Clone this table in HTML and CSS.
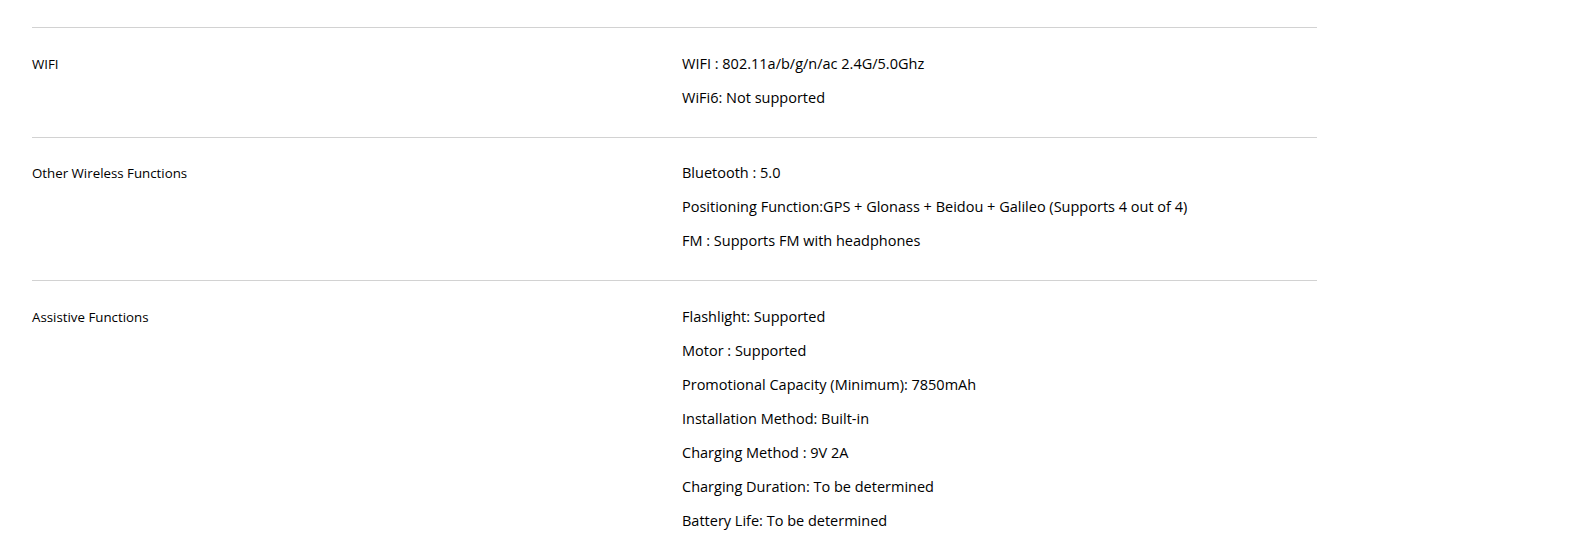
FILE: index.html
```html
<!DOCTYPE html>
<html lang="en">
<head>
<meta charset="utf-8">
<title>Specifications</title>
<link rel="stylesheet" href="styles.css">
</head>
<body>
<div class="specs">
  <div class="spec-row">
    <div class="spec-label">WIFI</div>
    <div class="spec-values">
      <p class="spec-value">WIFI : 802.11a/b/g/n/ac 2.4G/5.0Ghz</p>
      <p class="spec-value">WiFi6: Not supported</p>
    </div>
  </div>
  <div class="spec-row">
    <div class="spec-label">Other Wireless Functions</div>
    <div class="spec-values">
      <p class="spec-value">Bluetooth : 5.0</p>
      <p class="spec-value">Positioning Function:GPS + Glonass + Beidou + Galileo (Supports 4 out of 4)</p>
      <p class="spec-value">FM : Supports FM with headphones</p>
    </div>
  </div>
  <div class="spec-row">
    <div class="spec-label">Assistive Functions</div>
    <div class="spec-values">
      <p class="spec-value">Flashlight: Supported</p>
      <p class="spec-value">Motor : Supported</p>
      <p class="spec-value">Promotional Capacity (Minimum): 7850mAh</p>
      <p class="spec-value">Installation Method: Built-in</p>
      <p class="spec-value">Charging Method : 9V 2A</p>
      <p class="spec-value">Charging Duration: To be determined</p>
      <p class="spec-value">Battery Life: To be determined</p>
    </div>
  </div>
</div>
</body>
</html>
```

FILE: styles.css
```css
html, body {
  margin: 0;
  padding: 0;
  background: #fff;
}

body {
  font-family: "Open Sans", "Noto Sans", sans-serif;
  font-size: 14.5px;
  color: #000;
  overflow: hidden;
}

.specs {
  width: 1285px;
  margin: 27px 0 0 32px;
}

.spec-row {
  display: grid;
  grid-template-columns: 650px 1fr;
  align-items: baseline;
  border-top: 1px solid #d2d2d2;
  padding: 18.5px 0 22px;
}

.spec-label {
  font-size: 13.3px;
  line-height: 34px;
}

.spec-values {
  display: flex;
  flex-direction: column;
}

.spec-value {
  margin: 0;
  line-height: 34px;
}
```
